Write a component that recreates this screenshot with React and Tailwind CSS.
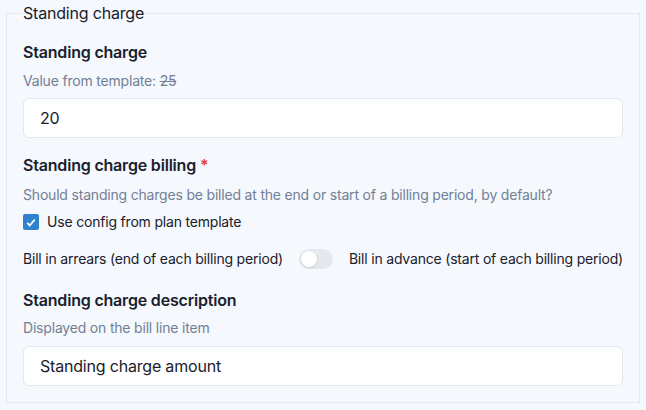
import React, { useState } from "react";

function Toggle({ checked, onChange }) {
  return (
    <button
      type="button"
      onClick={() => onChange(!checked)}
      className={`flex h-5 w-[34px] shrink-0 items-center rounded-full p-[2px] ${
        checked ? "bg-[#3182ce]" : "bg-[#e4e8ef]"
      }`}
    >
      <span
        className={`block h-4 w-4 rounded-full bg-white shadow-sm ${
          checked ? "translate-x-[14px]" : ""
        }`}
      />
    </button>
  );
}

export default function App() {
  const [charge, setCharge] = useState("20");
  const [desc, setDesc] = useState("Standing charge amount");
  const [useTemplate, setUseTemplate] = useState(true);
  const [advance, setAdvance] = useState(false);

  return (
    <div className="min-h-screen bg-[#f5f8fc] px-[6px] pt-[3px] font-['Inter',sans-serif] tracking-[-0.012em] text-[#1a202c]">
      <fieldset className="border border-[#e2e8f0] px-4 pb-4">
        <legend className="text-[16px] leading-5">Standing charge</legend>

        <div className="mt-[19px]">
          <label className="block text-[16px] font-semibold leading-5">
            Standing charge
          </label>
          <p className="mt-[9px] text-[14px] leading-5 text-[#718096]">
            Value from template: <span className="line-through">25</span>
          </p>
          <input
            type="text"
            value={charge}
            onChange={(e) => setCharge(e.target.value)}
            className="mt-[7px] h-10 w-full rounded-md border border-[#e2e8f0] bg-white px-4 text-[16px] outline-none"
          />
        </div>

        <div className="mt-[17px]">
          <label className="block text-[16px] font-semibold leading-5">
            Standing charge billing <span className="text-[#e53e3e]">*</span>
          </label>
          <p className="mt-[10px] text-[14px] leading-5 text-[#718096]">
            Should standing charges be billed at the end or start of a billing
            period, by default?
          </p>
          <label className="mt-[7px] flex items-center gap-2 text-[14px] leading-5">
            <span
              onClick={() => setUseTemplate(!useTemplate)}
              className={`flex h-4 w-4 items-center justify-center rounded-[2px] ${
                useTemplate ? "bg-[#3182ce]" : "border-2 border-[#e2e8f0] bg-white"
              }`}
            >
              {useTemplate && (
                <svg viewBox="0 0 12 10" className="h-[9px] w-[10px]" fill="none">
                  <polyline
                    points="1.5 5.5 4.5 8.5 10.5 1.5"
                    stroke="white"
                    strokeWidth="2"
                  />
                </svg>
              )}
            </span>
            Use config from plan template
          </label>
          <div className="mt-[17px] flex items-center justify-between gap-2 whitespace-nowrap text-[14px] leading-5">
            <span>Bill in arrears (end of each billing period)</span>
            <Toggle checked={advance} onChange={setAdvance} />
            <span>Bill in advance (start of each billing period)</span>
          </div>
        </div>

        <div className="mt-[21px]">
          <label className="block text-[16px] font-semibold leading-5">
            Standing charge description
          </label>
          <p className="mt-[8px] text-[14px] leading-5 text-[#718096]">
            Displayed on the bill line item
          </p>
          <input
            type="text"
            value={desc}
            onChange={(e) => setDesc(e.target.value)}
            className="mt-[8px] h-10 w-full rounded-md border border-[#e2e8f0] bg-white px-4 text-[16px] outline-none"
          />
        </div>
      </fieldset>
    </div>
  );
}
